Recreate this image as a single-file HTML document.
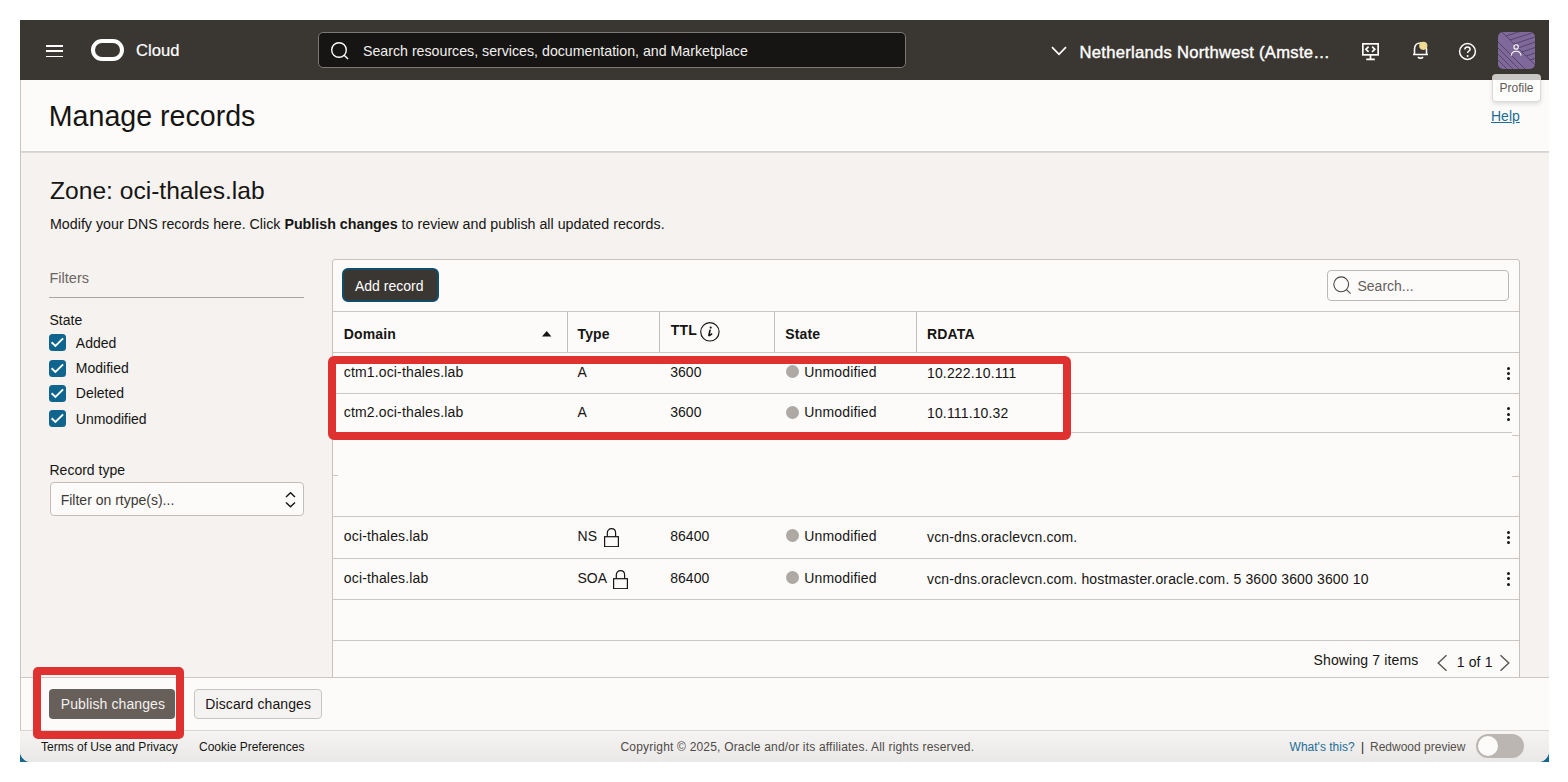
<!DOCTYPE html>
<html><head><meta charset="utf-8">
<style>
*{box-sizing:border-box;margin:0;padding:0}
html,body{width:1568px;height:782px;overflow:hidden;background:#fff;font-family:"Liberation Sans",sans-serif;color:#161513}
.a{position:absolute}
.t{position:absolute;line-height:1;white-space:nowrap}
#app{position:absolute;left:20px;top:20px;width:1529px;height:742px;overflow:hidden;background:#f5f2ef;border-radius:0 0 11px 11px}
.corner{position:absolute;width:12px;height:12px;background:#136890}
#hdr{position:absolute;left:0;top:0;width:1529px;height:60px;background:#3a3632}
#ph{position:absolute;left:0;top:60px;width:1529px;height:73px;background:#fcfbfa;border-bottom:1px solid #dedad6}
#ph:after{content:"";position:absolute;left:0;top:70px;width:1529px;height:1px;background:#fff;box-shadow:0 1px 0 #d5d1cd}
.hl{position:absolute;left:0;width:1px;background:#c9c5c1}
.card{position:absolute;left:312px;top:239px;width:1188px;height:460px;background:#fcfbfa;border:1px solid #c7c2bd;border-radius:3px}
.hline{position:absolute;height:1px;background:#ccc7c2}
.vline{position:absolute;width:1px;background:#c3beb9}
.cell{position:absolute;font-size:14px;line-height:1;white-space:nowrap;color:#161513;letter-spacing:0.15px}
.num{letter-spacing:0}
.th{font-weight:bold}
.dot{position:absolute;width:13px;height:13px;border-radius:50%;background:#aea9a4}
.cb{position:absolute;left:29px;width:17px;height:17px;border-radius:3.5px;background:#0f658d}
.cb svg{position:absolute;left:0;top:0}
.kebab{position:absolute;width:3px}
.kebab i{position:absolute;left:0;width:3.2px;height:3.2px;border-radius:50%;background:#161513}
.red{position:absolute;border:8px solid #e03131;border-radius:6px}
</style></head>
<body>
<div class="corner" style="left:20px;top:750px"></div><div class="corner" style="left:1537px;top:750px"></div>
<div id="app">
  <!-- top header -->
  <div id="hdr">
    <div class="a" style="left:26px;top:25.3px;width:17px;height:1.9px;background:#fff"></div>
    <div class="a" style="left:26px;top:30.3px;width:17px;height:1.9px;background:#fff"></div>
    <div class="a" style="left:26px;top:35.6px;width:17px;height:1.9px;background:#fff"></div>
    <div class="a" style="left:70.5px;top:19px;width:33.5px;height:21.5px;border:4px solid #fff;border-radius:11px"></div>
    <div class="t" style="left:116px;top:23px;font-size:16.6px;color:#fff;-webkit-text-stroke:0.2px #fff">Cloud</div>
    <div class="a" style="left:298px;top:12px;width:588px;height:36px;background:#161513;border:1px solid #7d7873;border-radius:5px"></div>
    <svg class="a" style="left:310px;top:21px" width="20" height="20" viewBox="0 0 20 20"><circle cx="9" cy="9" r="7.3" fill="none" stroke="#fff" stroke-width="1.4"/><path d="M14.2 14.2 L18 18" stroke="#fff" stroke-width="1.4"/></svg>
    <div class="t" style="left:343px;top:24px;font-size:14.2px;color:#f1efed">Search resources, services, documentation, and Marketplace</div>
    <svg class="a" style="left:1031px;top:26px" width="16" height="10" viewBox="0 0 16 10"><path d="M1 1.2 L8 8.3 L15 1.2" fill="none" stroke="#fff" stroke-width="1.7"/></svg>
    <div class="t" style="left:1059.5px;top:24.6px;font-size:16.6px;letter-spacing:0.28px;-webkit-text-stroke:0.4px #fff;color:#fff">Netherlands Northwest (Amste…</div>
    <!-- cloud shell -->
    <svg class="a" style="left:1342px;top:22px" width="19" height="19" viewBox="0 0 19 19"><rect x="0.85" y="1.85" width="15.3" height="11" fill="none" stroke="#fff" stroke-width="1.7"/><path d="M8.5 12.8 V16.5 M4.2 17.3 H12.8" stroke="#fff" stroke-width="1.7"/><path d="M6.6 4.7 L3.9 7.3 L6.6 9.9 M10.1 4.7 L12.8 7.3 L10.1 9.9" fill="none" stroke="#fff" stroke-width="1.7"/></svg>
    <!-- bell -->
    <svg class="a" style="left:1391px;top:20.3px" width="19" height="20" viewBox="0 0 19 20"><path d="M2 14.5 H17 M3.5 14.5 V9 C3.5 5.5 6 3 9.5 3 C13 3 15.5 5.5 15.5 9 V14.5" fill="none" stroke="#fff" stroke-width="1.6"/><path d="M7 17 C8 18.6 11 18.6 12 17" fill="none" stroke="#fff" stroke-width="1.6"/><circle cx="12.3" cy="5.8" r="4.1" fill="#f2d992"/></svg>
    <!-- help -->
    <svg class="a" style="left:1438px;top:22px" width="19" height="19" viewBox="0 0 19 19"><circle cx="9.5" cy="9.5" r="7.9" fill="none" stroke="#fff" stroke-width="1.5"/><path d="M6.9 7.4 C6.9 5.9 8 4.9 9.5 4.9 C11 4.9 12.1 5.9 12.1 7.2 C12.1 8.9 9.6 9.1 9.6 11" fill="none" stroke="#fff" stroke-width="1.5"/><circle cx="9.6" cy="13.9" r="1" fill="#fff"/></svg>
    <!-- avatar -->
    <div class="a" style="left:1478px;top:12px;width:36.5px;height:37px;border-radius:5px;overflow:hidden;background:#7f699b">
      <svg width="37" height="37" viewBox="0 0 37 37" style="position:absolute;left:0;top:0"><g stroke="#4f3f63" stroke-width="1" fill="none" opacity="0.85"><path d="M-2 8 L27 37 M-2 14 L21 37 M-2 20 L15 37 M-2 26 L9 37 M-2 32 L3 37 M4 0 L37 33 M-1 -1 L0 0"/><path d="M8 4 L30 -3 M12 8 L37 0 M16 12 L37 5 M20 16 L37 10 M24 20 L37 15.5 M28 24 L37 21 M32 28 L37 26.5"/></g><circle cx="18.1" cy="14.9" r="2.2" fill="none" stroke="#fff" stroke-width="1.1"/><path d="M13.2 23.6 C13.6 20.6 15.6 19.3 18.1 19.3 C20.6 19.3 22.6 20.6 23.1 23.6" fill="none" stroke="#fff" stroke-width="1.1"/></svg>
    </div>
  </div>
  <!-- page header -->
  <div id="ph">
    <div class="t" style="left:28.8px;top:21.5px;font-size:28.6px;color:#161513">Manage records</div>
    <div class="t" style="left:1471px;top:29.4px;font-size:14px;color:#1e6b93;text-decoration:underline">Help</div>
  </div>
  <!-- tooltip -->
  <div class="a" style="left:1471.5px;top:54px;width:49px;height:27.5px;background:rgba(253,253,252,0.72);border:1px solid rgba(200,196,192,0.6);border-radius:4px;box-shadow:0 2px 4px rgba(0,0,0,0.12)"></div>
  <div class="t" style="left:1479.5px;top:61.8px;font-size:12px;color:#5f5b57">Profile</div>

  <!-- left page border -->
  <div class="hl" style="top:60px;height:682px"></div>

  <!-- Zone -->
  <div class="t" style="left:30px;top:159.3px;font-size:24.6px;color:#161513">Zone: oci-thales.lab</div>
  <div class="t" style="left:30px;top:197px;font-size:14.25px;color:#161513">Modify your DNS records here. Click <b>Publish changes</b> to review and publish all updated records.</div>

  <!-- filters -->
  <div class="t" style="left:29.5px;top:250.8px;font-size:14.5px;color:#6b6661;font-weight:normal">Filters</div>
  <div class="a" style="left:29px;top:277px;width:255px;height:1px;background:#aaa5a0"></div>
  <div class="t" style="left:29.5px;top:292.9px;font-size:14px">State</div>
  <div class="cb" style="top:314px"><svg width="17" height="17"><path d="M2.6 8.3 L6.4 12 L14.1 4.3" fill="none" stroke="#fff" stroke-width="1.9"/></svg></div>
  <div class="t" style="left:55.8px;top:315.6px;font-size:14px">Added</div>
  <div class="cb" style="top:339.5px"><svg width="17" height="17"><path d="M2.6 8.3 L6.4 12 L14.1 4.3" fill="none" stroke="#fff" stroke-width="1.9"/></svg></div>
  <div class="t" style="left:55.8px;top:340.9px;font-size:14px">Modified</div>
  <div class="cb" style="top:365px"><svg width="17" height="17"><path d="M2.6 8.3 L6.4 12 L14.1 4.3" fill="none" stroke="#fff" stroke-width="1.9"/></svg></div>
  <div class="t" style="left:55.8px;top:366.2px;font-size:14px">Deleted</div>
  <div class="cb" style="top:390px"><svg width="17" height="17"><path d="M2.6 8.3 L6.4 12 L14.1 4.3" fill="none" stroke="#fff" stroke-width="1.9"/></svg></div>
  <div class="t" style="left:55.8px;top:391.5px;font-size:14px">Unmodified</div>
  <div class="t" style="left:29.5px;top:443.2px;font-size:14px">Record type</div>
  <div class="a" style="left:29.5px;top:462px;width:254.5px;height:34px;background:#fcfbfa;border:1px solid #c2bdb8;border-radius:4px"></div>
  <div class="t" style="left:40.7px;top:473.1px;font-size:14px;color:#3d3935">Filter on rtype(s)...</div>
  <svg class="a" style="left:265px;top:471px" width="11" height="17" viewBox="0 0 11 17"><path d="M1 6 L5.5 1.8 L10 6 M1 11.5 L5.5 15.7 L10 11.5" fill="none" stroke="#161513" stroke-width="1.4"/></svg>

  <!-- table card -->
  <div class="card"></div>
  <div class="a" style="left:321.5px;top:248px;width:97px;height:34px;background:#3a3632;border:2px solid #104d6c;border-radius:6px"></div>
  <div class="t" style="left:335px;top:259px;font-size:14px;color:#fff">Add record</div>
  <div class="a" style="left:1307px;top:250px;width:182px;height:31px;background:#fcfbfa;border:1px solid #bdb8b3;border-radius:4px"></div>
  <svg class="a" style="left:1312px;top:255px" width="20" height="20" viewBox="0 0 20 20"><circle cx="9.2" cy="9.3" r="7.4" fill="none" stroke="#4a4541" stroke-width="1.1"/><path d="M14.4 14.6 L18.6 18.6" stroke="#4a4541" stroke-width="1.1"/></svg>
  <div class="t" style="left:1337.5px;top:258.5px;font-size:14px;color:#65605b">Search...</div>

  <div class="hline" style="left:313px;top:291px;width:1186px"></div>
  <div class="hline" style="left:313px;top:332px;width:1186px"></div>
  <div class="vline" style="left:546.5px;top:291px;height:41px"></div>
  <div class="vline" style="left:639px;top:291px;height:41px"></div>
  <div class="vline" style="left:754px;top:291px;height:41px"></div>
  <div class="vline" style="left:896px;top:291px;height:41px"></div>

  <div class="cell th" style="left:323.8px;top:306.8px">Domain</div>
  <svg class="a" style="left:521.5px;top:311.3px" width="10" height="6" viewBox="0 0 10 6"><path d="M0 5.5 L4.7 0 L9.4 5.5 Z" fill="#161513"/></svg>
  <div class="cell th" style="left:557.5px;top:306.6px">Type</div>
  <div class="cell th" style="left:650.8px;top:303px">TTL</div>
  <svg class="a" style="left:680px;top:302px" width="20" height="20" viewBox="0 0 20 20"><circle cx="9.9" cy="9.8" r="9.2" fill="none" stroke="#161513" stroke-width="1.15"/><circle cx="10.7" cy="5.6" r="1.05" fill="#161513"/><path d="M10 8.3 L8.9 13.1 C8.8 13.6 9.3 13.7 9.7 13.4 L11.6 12" fill="none" stroke="#161513" stroke-width="1.6" stroke-linecap="round"/></svg>
  <div class="cell th" style="left:765.3px;top:306.6px">State</div>
  <div class="cell th" style="left:907px;top:306.6px">RDATA</div>

  <div class="hline" style="left:313px;top:373px;width:1186px"></div>
  <div class="hline" style="left:313px;top:412px;width:1179px"></div>
  <div class="hline" style="left:1492px;top:414.5px;width:7px"></div>
  <div class="hline" style="left:1492px;top:455.5px;width:7px"></div>
  <div class="hline" style="left:313px;top:455px;width:5px"></div>
  <div class="hline" style="left:313px;top:496px;width:1186px"></div>
  <div class="hline" style="left:313px;top:538px;width:1186px"></div>
  <div class="hline" style="left:313px;top:579px;width:1186px"></div>
  <div class="hline" style="left:313px;top:620px;width:1186px"></div>

  <!-- row 1 -->
  <div class="cell" style="left:323.8px;top:345px">ctm1.oci-thales.lab</div>
  <div class="cell" style="left:557.5px;top:345px">A</div>
  <div class="cell num" style="left:650.3px;top:345px">3600</div>
  <div class="dot" style="left:765.7px;top:345.1px"></div>
  <div class="cell" style="left:784.3px;top:345px">Unmodified</div>
  <div class="cell" style="left:907px;top:346px">10.222.10.111</div>
  <div class="kebab" style="left:1486.6px;top:346.5px"><i style="top:0"></i><i style="top:5.3px"></i><i style="top:10.6px"></i></div>
  <!-- row 2 -->
  <div class="cell" style="left:323.8px;top:385.4px">ctm2.oci-thales.lab</div>
  <div class="cell" style="left:557.5px;top:385.4px">A</div>
  <div class="cell num" style="left:650.3px;top:385.4px">3600</div>
  <div class="dot" style="left:765.7px;top:385.6px"></div>
  <div class="cell" style="left:784.3px;top:385.4px">Unmodified</div>
  <div class="cell" style="left:907px;top:386.4px">10.111.10.32</div>
  <div class="kebab" style="left:1486.6px;top:387.3px"><i style="top:0"></i><i style="top:5.3px"></i><i style="top:10.6px"></i></div>
  <!-- row NS -->
  <div class="cell" style="left:323.8px;top:509.2px">oci-thales.lab</div>
  <div class="cell" style="left:557.5px;top:509.2px">NS</div>
  <svg class="a" style="left:583px;top:507px" width="17" height="20" viewBox="0 0 17 20"><rect x="1.6" y="9.7" width="13.8" height="10" fill="none" stroke="#161513" stroke-width="1.2"/><path d="M4.3 9.7 V6 C4.3 3.3 6.1 1.7 8.5 1.7 C10.9 1.7 12.6 3.3 12.6 6 V9.7" fill="none" stroke="#161513" stroke-width="1.2"/></svg>
  <div class="cell num" style="left:650.3px;top:509.2px">86400</div>
  <div class="dot" style="left:765.7px;top:509.4px"></div>
  <div class="cell" style="left:784.3px;top:509.2px">Unmodified</div>
  <div class="cell" style="left:907px;top:510px">vcn-dns.oraclevcn.com.</div>
  <div class="kebab" style="left:1486.6px;top:510.7px"><i style="top:0"></i><i style="top:5.3px"></i><i style="top:10.6px"></i></div>
  <!-- row SOA -->
  <div class="cell" style="left:323.8px;top:550.8px">oci-thales.lab</div>
  <div class="cell num" style="left:557.5px;top:550.8px">SOA</div>
  <svg class="a" style="left:592px;top:548.5px" width="17" height="20" viewBox="0 0 17 20"><rect x="1.6" y="9.7" width="13.8" height="10" fill="none" stroke="#161513" stroke-width="1.2"/><path d="M4.3 9.7 V6 C4.3 3.3 6.1 1.7 8.5 1.7 C10.9 1.7 12.6 3.3 12.6 6 V9.7" fill="none" stroke="#161513" stroke-width="1.2"/></svg>
  <div class="cell num" style="left:650.3px;top:550.8px">86400</div>
  <div class="dot" style="left:765.7px;top:551px"></div>
  <div class="cell" style="left:784.3px;top:550.8px">Unmodified</div>
  <div class="cell" style="left:907px;top:551.6px">vcn-dns.oraclevcn.com. hostmaster.oracle.com. 5 3600 3600 3600 10</div>
  <div class="kebab" style="left:1486.6px;top:552px"><i style="top:0"></i><i style="top:5.3px"></i><i style="top:10.6px"></i></div>

  <!-- pagination -->
  <div class="cell" style="left:1293.5px;top:632.7px">Showing 7 items</div>
  <svg class="a" style="left:1416px;top:634px" width="12" height="18" viewBox="0 0 12 18"><path d="M10.5 1.2 L2.2 9 L10.5 16.8" fill="none" stroke="#5a5551" stroke-width="1.4"/></svg>
  <div class="cell" style="left:1436.7px;top:634.6px">1 of 1</div>
  <svg class="a" style="left:1479px;top:634px" width="12" height="18" viewBox="0 0 12 18"><path d="M1.5 1.2 L9.8 9 L1.5 16.8" fill="none" stroke="#5a5551" stroke-width="1.4"/></svg>

  <!-- bottom toolbar -->
  <div class="a" style="left:0;top:657px;width:1529px;height:53px;background:#fcfbfa;border-top:1px solid #cdc8c3"></div>
  <div class="hl" style="top:657px;height:53px"></div>
  <div class="a" style="left:29.2px;top:669px;width:126.3px;height:30px;background:#675f59;border-radius:4px"></div>
  <div class="t" style="left:40.8px;top:677.1px;font-size:14px;letter-spacing:0.1px;color:#f3f1ef">Publish changes</div>
  <div class="a" style="left:173.5px;top:669px;width:128px;height:30px;background:#f5f3f1;border:1px solid #c9c4bf;border-radius:4px"></div>
  <div class="t" style="left:185.3px;top:677.1px;font-size:14px;letter-spacing:0.1px;color:#161513">Discard changes</div>

  <!-- footer -->
  <div class="a" style="left:0;top:709.8px;width:1529px;height:33px;background:linear-gradient(#f5f4f3,#e9e8e7);border-top:1px solid #d8d5d2"></div>
  <div class="t" style="left:21px;top:720.6px;font-size:12px;color:#161513">Terms of Use and Privacy</div>
  <div class="t" style="left:179px;top:720.6px;font-size:12px;color:#161513">Cookie Preferences</div>
  <div class="t" style="left:600.5px;top:720.6px;font-size:12px;color:#4f4a46;letter-spacing:0.19px">Copyright © 2025, Oracle and/or its affiliates. All rights reserved.</div>
  <div class="t" style="left:1269.6px;top:720.6px;font-size:12px;color:#1c6d96">What's this?</div>
  <div class="t" style="left:1341px;top:720.6px;font-size:12px;color:#161513">|</div>
  <div class="t" style="left:1350px;top:720.6px;font-size:12px;color:#55504b">Redwood preview</div>
  <div class="a" style="left:1455.7px;top:714.3px;width:48.4px;height:23.7px;border-radius:12px;background:#bbb6b1"></div>
  <div class="a" style="left:1458px;top:716.3px;width:20px;height:20px;border-radius:50%;background:#fcfbfa"></div>

  <!-- red boxes -->
  <div class="red" style="left:307.9px;top:336.3px;width:743.1px;height:83.6px"></div>
  <div class="red" style="left:13.3px;top:647.2px;width:150.6px;height:71.5px;border-radius:5px"></div>
</div>
</body></html>
